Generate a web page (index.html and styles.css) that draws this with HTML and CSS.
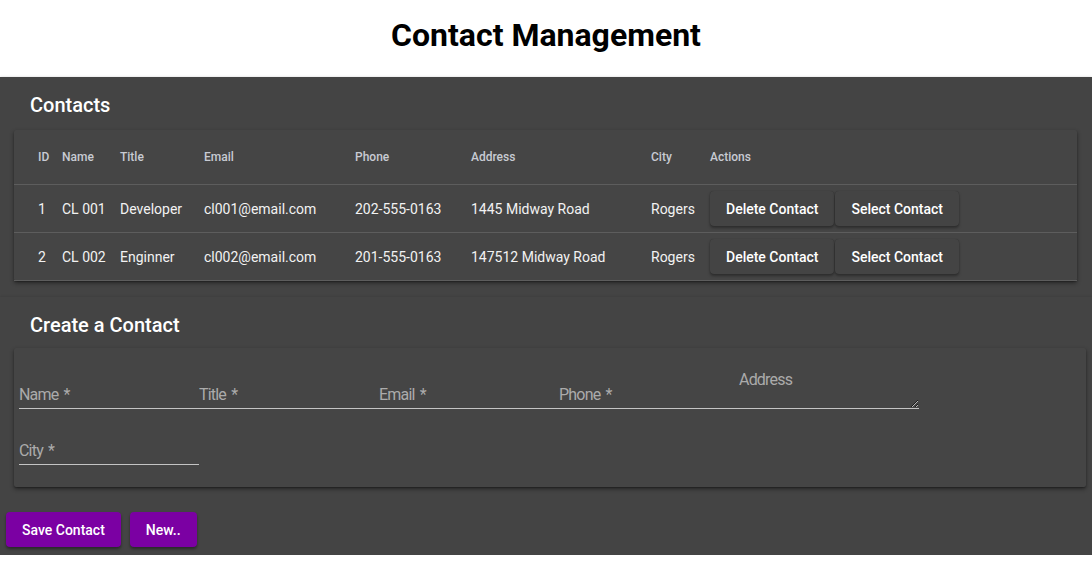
FILE: index.html
```html
<!DOCTYPE html>
<html lang="en">
<head>
<meta charset="utf-8">
<title>Contact Management</title>
<link rel="stylesheet" href="styles.css">
</head>
<body>
<h1 class="page-title">Contact Management</h1>

<section class="paper paper-list">
  <h2 class="paper-title">Contacts</h2>
  <div class="card table-card">
    <table class="contacts">
      <thead>
        <tr>
          <th class="c-id">ID</th>
          <th class="c-name">Name</th>
          <th class="c-title">Title</th>
          <th class="c-email">Email</th>
          <th class="c-phone">Phone</th>
          <th class="c-address">Address</th>
          <th class="c-city">City</th>
          <th class="c-actions">Actions</th>
        </tr>
      </thead>
      <tbody>
        <tr>
          <td class="c-id">1</td>
          <td>CL 001</td>
          <td>Developer</td>
          <td>cl001@email.com</td>
          <td>202-555-0163</td>
          <td>1445 Midway Road</td>
          <td>Rogers</td>
          <td class="actions"><div class="action-group"><button class="btn btn-dark">Delete Contact</button><button class="btn btn-dark">Select Contact</button></div></td>
        </tr>
        <tr>
          <td class="c-id">2</td>
          <td>CL 002</td>
          <td>Enginner</td>
          <td>cl002@email.com</td>
          <td>201-555-0163</td>
          <td>147512 Midway Road</td>
          <td>Rogers</td>
          <td class="actions"><div class="action-group"><button class="btn btn-dark">Delete Contact</button><button class="btn btn-dark">Select Contact</button></div></td>
        </tr>
      </tbody>
    </table>
  </div>
</section>

<section class="paper paper-form">
  <h2 class="paper-title">Create a Contact</h2>
  <div class="card form-card">
    <div class="form-row">
      <input class="field" type="text" placeholder="Name *">
      <input class="field" type="text" placeholder="Title *">
      <input class="field" type="text" placeholder="Email *">
      <input class="field" type="text" placeholder="Phone *">
      <div class="area-field">
        <span class="area-label">Address</span>
        <textarea class="area"></textarea>
      </div>
    </div>
    <div class="form-row second">
      <input class="field" type="text" placeholder="City *">
    </div>
  </div>
  <div class="form-actions">
    <button class="btn btn-purple">Save Contact</button>
    <button class="btn btn-purple">New..</button>
  </div>
</section>
</body>
</html>
```

FILE: styles.css
```css
* { box-sizing: border-box; }

body {
  margin: 0;
  font-family: Roboto, "Noto Sans", "Liberation Sans", sans-serif;
  background: #ffffff;
  color: #000;
}

.page-title {
  margin: 17px 0 23px;
  font-size: 32px;
  line-height: 37px;
  font-weight: 700;
  text-align: center;
  color: #000;
}

.paper {
  background: #444444;
  box-shadow: 0 1px 3px rgba(0, 0, 0, 0.35);
  color: #fff;
}

.paper-list {
  padding: 14px 15px 16px 14px;
}

.paper-form {
  padding: 14px 6px 8px 14px;
}

.paper-title {
  margin: 0 0 11px 16px;
  font-size: 20px;
  line-height: 28px;
  font-weight: 500;
  color: #ffffff;
}

.paper-form .paper-title {
  margin-bottom: 9px;
}

.card {
  background: #454545;
  box-shadow: 0 2px 4px rgba(0, 0, 0, 0.45), 0 1px 1px rgba(0, 0, 0, 0.2);
  border-radius: 2px;
}

/* Table */
.contacts {
  width: 100%;
  border-collapse: separate;
  border-spacing: 0;
  table-layout: fixed;
}

.contacts th {
  height: 55px;
  text-align: left;
  vertical-align: middle;
  font-size: 12px;
  font-weight: 500;
  color: #c8cbd3;
  padding: 0 0 1px;
  border-bottom: 1px solid #5d5d5d;
}

.contacts td {
  height: 48px;
  padding: 0;
  vertical-align: middle;
  font-size: 14px;
  color: #f2f2f2;
  border-bottom: 1px solid #5d5d5d;
  white-space: nowrap;
}

.contacts .c-id { width: 48px; padding-left: 24px; }
.c-name { width: 58px; }
.c-title { width: 84px; }
.c-email { width: 151px; }
.c-phone { width: 116px; }
.c-address { width: 180px; }
.c-city { width: 59px; }

.action-group {
  display: flex;
  align-items: center;
  gap: 1px;
}

.btn {
  font-family: Roboto, "Noto Sans", "Liberation Sans", sans-serif;
  font-size: 14px;
  font-weight: 500;
  height: 35px;
  border: 0;
  border-radius: 4px;
  padding: 0 16px;
  color: #fff;
  cursor: pointer;
}

.btn-dark {
  background: #444444;
  box-shadow: 0 2px 3px rgba(0, 0, 0, 0.35), 0 0 1px rgba(0, 0, 0, 0.3);
}

/* Form */
.form-card {
  padding: 22px 5px 22px;
}

.form-row {
  display: flex;
  align-items: flex-end;
}

.form-row.second {
  margin-top: 32px;
}

.field {
  width: 180px;
  height: 24px;
  border: 0;
  border-bottom: 1px solid #c4c4c4;
  background: transparent;
  padding: 0 0 4px;
  font-family: Roboto, "Noto Sans", "Liberation Sans", sans-serif;
  font-size: 16px;
  letter-spacing: -0.8px;
  word-spacing: 2px;
  color: #fff;
  outline: none;
}

.field::placeholder {
  color: #ababab;
  opacity: 1;
}

.area-field {
  width: 180px;
  display: flex;
  flex-direction: column;
}

.area-label {
  font-size: 16px;
  letter-spacing: -0.8px;
  line-height: 19px;
  color: #ababab;
}

.area {
  width: 180px;
  height: 20px;
  border: 0;
  border-bottom: 1px solid #c4c4c4;
  background: transparent;
  resize: both;
  outline: none;
  color: #fff;
  font-family: Roboto, "Noto Sans", "Liberation Sans", sans-serif;
  font-size: 16px;
  padding: 0;
  display: block;
}

.form-actions {
  display: flex;
  gap: 9px;
  margin: 25px 0 0 -8px;
}

.btn-purple {
  background: #7b00a3;
  box-shadow: 0 2px 3px rgba(0, 0, 0, 0.4);
  padding: 0 16px;
}
```
